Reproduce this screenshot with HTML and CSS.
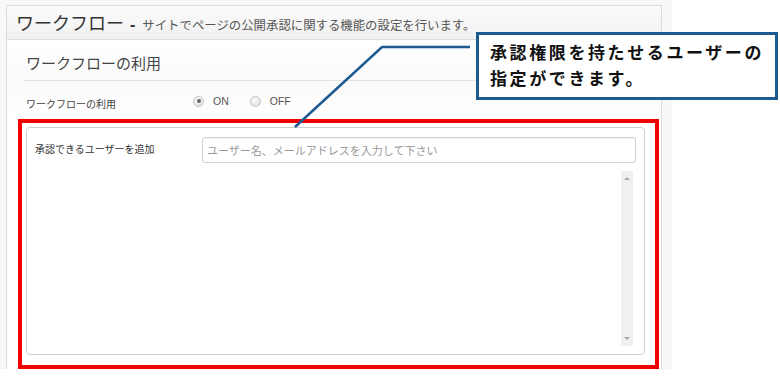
FILE: index.html
```
<!DOCTYPE html>
<html lang="ja">
<head>
<meta charset="utf-8">
<link rel="stylesheet" href="styles.css">
</head>
<body>
<div class="page">
  <div class="panel">
    <div class="panel-head">
      <span class="title">ワークフロー</span><span class="dash">-</span><span class="sub">サイトでページの公開承認に関する機能の設定を行います。</span>
    </div>
    <div class="panel-body">
      <div class="section-title">ワークフローの利用</div>
      <div class="row">
        <div class="row-label">ワークフローの利用</div>
        <label class="radio"><span class="dot checked"></span>ON</label>
        <label class="radio"><span class="dot"></span>OFF</label>
      </div>
      <div class="highlight">
        <div class="inner">
          <div class="field-row">
            <div class="field-label">承認できるユーザーを追加</div>
            <div class="input">ユーザー名、メールアドレスを入力して下さい</div>
          </div>
          <div class="list">
            <div class="scrollbar">
              <span class="arrow up"></span>
              <span class="arrow down"></span>
            </div>
          </div>
        </div>
      </div>
    </div>
  </div>
</div>
<svg class="leader" width="780" height="379" viewBox="0 0 780 379">
  <polyline points="470,47 382,47 295,127" fill="none" stroke="#1c5a90" stroke-width="2.5"/>
</svg>
<div class="callout">承認権限を持たせるユーザーの<br>指定ができます。</div>
</body>
</html>
```
FILE: styles.css
```
* { box-sizing: border-box; }
html, body { margin: 0; padding: 0; background: #fff; }
body {
  width: 780px;
  height: 379px;
  overflow: hidden;
  position: relative;
  font-family: "Noto Sans CJK JP", "Noto Sans", sans-serif;
  color: #444;
}
.page {
  width: 672px;
  height: 369px;
  background: #f8f8f8;
  padding: 5px 0 0 6px;
  overflow: hidden;
}
.panel {
  width: 656px;
  height: 400px;
  background: #fff;
  border: 1px solid #dcdcdc;
}
.panel-head {
  height: 34px;
  padding-left: 9px;
  background: linear-gradient(#fbfbfb, #f1f1f1);
  border-bottom: 1px solid #dedede;
  line-height: 33px;
  white-space: nowrap;
}
.title {
  font-size: 18px;
  color: #333;
  letter-spacing: 0;
}
.dash {
  font-family: "Liberation Sans", sans-serif;
  font-weight: bold;
  font-size: 16px;
  color: #333;
  margin: 0 7px 0 6px;
}
.sub {
  font-size: 12.4px;
  color: #555;
}
.panel-body {
  background: linear-gradient(#fff, #fafafa 40px, #fff 80px);
}
.section-title {
  margin: 0 16px 0 17px;
  height: 41px;
  padding: 13px 0 0 2px;
  font-size: 15px;
  line-height: 20px;
  color: #444;
  border-bottom: 1px solid #e3e3e3;
}
.row {
  height: 38px;
  display: flex;
  align-items: center;
  padding-left: 19px;
  padding-top: 2px;
}
.row-label {
  width: 167px;
  font-size: 10px;
  color: #444;
  padding-top: 4px;
}
.radio {
  display: flex;
  align-items: center;
  font-family: "Liberation Sans", sans-serif;
  font-size: 10.5px;
  color: #555;
  margin-right: 21px;
}
.dot {
  width: 11px;
  height: 11px;
  border-radius: 50%;
  border: 1px solid #c4c4c4;
  background: radial-gradient(circle at 40% 35%, #fafafa, #dcdcdc);
  margin-right: 9px;
  position: relative;
}
.dot.checked::after {
  content: "";
  position: absolute;
  left: 2.5px;
  top: 2.5px;
  width: 4px;
  height: 4px;
  border-radius: 50%;
  background: #666;
}
.highlight {
  margin-left: 11px;
  width: 641px;
  height: 250px;
  border: 4px solid #f20000;
  background: #fff;
  padding: 4px 0 0 4px;
}
.inner {
  width: 619px;
  height: 228px;
  border: 1px solid #cfcfcf;
  border-radius: 4px;
  padding: 9px 8px 0 8px;
}
.field-row {
  display: flex;
  align-items: center;
}
.field-label {
  width: 167px;
  font-size: 10px;
  color: #333;
  align-self: flex-start;
  padding-top: 4px;
}
.input {
  width: 434px;
  height: 26px;
  border: 1px solid #d0d0d0;
  border-radius: 3px;
  font-size: 11px;
  color: #999;
  line-height: 24px;
  padding-left: 4px;
  box-shadow: inset 0 1px 1px rgba(0,0,0,0.04);
}
.list {
  margin: 8px 0 0 167px;
  width: 431px;
  height: 175px;
  display: flex;
  justify-content: flex-end;
}
.scrollbar {
  width: 12px;
  height: 175px;
  background: #f0f0f0;
  position: relative;
}
.arrow {
  position: absolute;
  left: 3px;
  width: 0;
  height: 0;
  border-left: 3px solid transparent;
  border-right: 3px solid transparent;
}
.arrow.up {
  top: 6px;
  border-bottom: 3px solid #a8a8a8;
}
.arrow.down {
  bottom: 6px;
  border-top: 3px solid #a8a8a8;
}
.leader {
  position: absolute;
  left: 0;
  top: 0;
}
.callout {
  position: absolute;
  left: 476px;
  top: 32px;
  width: 302px;
  height: 68px;
  border: 3px solid #1c5a90;
  background: #fff;
  padding: 4px 0 0 11px;
  font-weight: bold;
  font-size: 17px;
  line-height: 26px;
  letter-spacing: 2.6px;
  color: #111;
  white-space: nowrap;
}
```
